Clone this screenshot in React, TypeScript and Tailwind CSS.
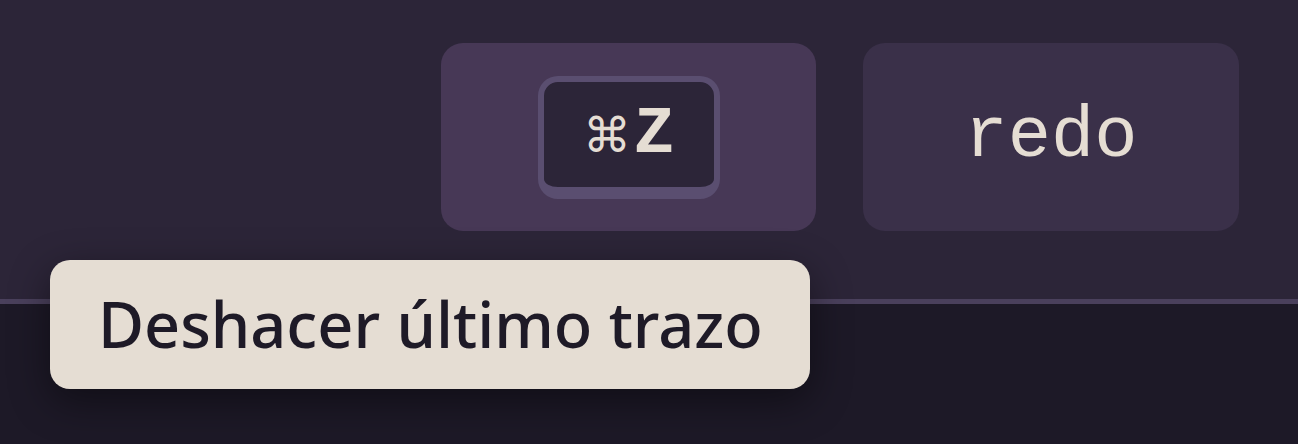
import React from 'react';

function Keycap() {
    return (
        <div className="flex items-center justify-center w-[182px] h-[123px] rounded-[20px] border-[6px] border-b-[12px] border-[#5a4e70] bg-[#2c2538] text-[#e5ddd3]">
            <span className="text-[48px] leading-none font-['DejaVu_Sans',sans-serif] mr-[3px] mt-[2px]">⌘</span>
            <span className="text-[67px] leading-none font-bold font-['Liberation_Mono',monospace]">Z</span>
        </div>
    );
}

export default function App() {
    return (
        <div className="relative w-[1298px] h-[444px] overflow-hidden bg-[#1d1927]">
            {/* barra de acciones */}
            <div className="flex justify-end items-start gap-[47px] h-[304px] pt-[43px] pr-[59px] bg-[#2c2538] border-b-[5px] border-[#4a405c]">
                <button className="flex items-center justify-center w-[375px] h-[188px] rounded-[22px] bg-[#473856]">
                    <Keycap />
                </button>
                <button className="flex items-center justify-center w-[376px] h-[188px] rounded-[22px] bg-[#3a3049] text-[#e5ddd3] text-[72px] leading-none font-['Liberation_Mono',monospace]">
                    redo
                </button>
            </div>

            {/* tooltip */}
            <div className="absolute left-[50px] top-[260px] w-[760px] h-[129px] flex items-center pl-[48px] pb-[2px] rounded-[20px] bg-[#e5ddd3] text-[#1e1a27] shadow-[0_12px_40px_rgba(0,0,0,0.45)]">
                <span className="text-[63px] font-medium leading-none font-['Noto_Sans',sans-serif]">Deshacer último trazo</span>
            </div>
        </div>
    );
}
